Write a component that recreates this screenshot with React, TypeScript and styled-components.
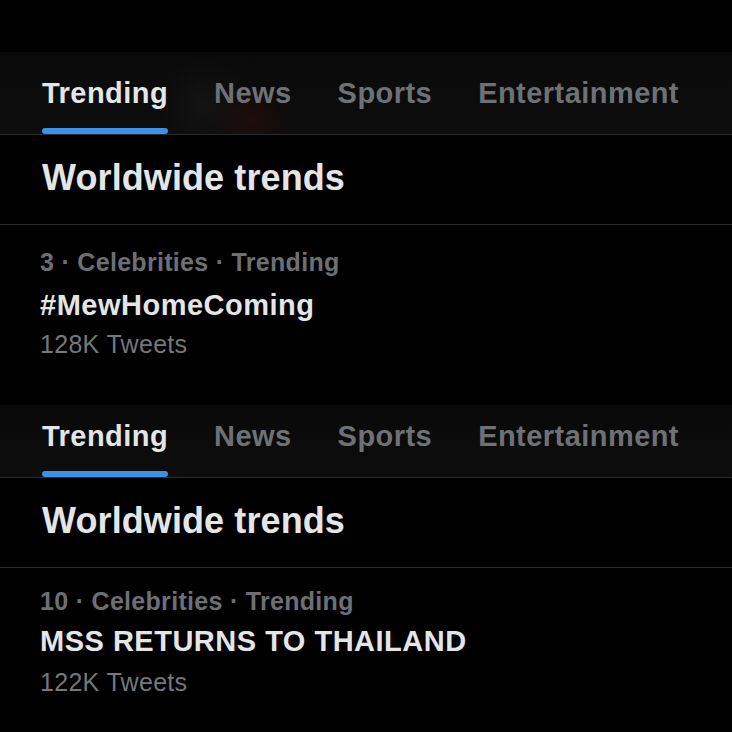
import styled, { createGlobalStyle } from 'styled-components';

const GlobalStyle = createGlobalStyle`
  html, body {
    margin: 0;
    padding: 0;
    background: #000;
  }
  body {
    font-family: 'Liberation Sans', Arial, sans-serif;
    -webkit-font-smoothing: antialiased;
  }
`;

const Page = styled.div`
  width: 732px;
  height: 732px;
  overflow: hidden;
  background: #000;
  padding-top: 52px;
  box-sizing: border-box;
`;

const Panel = styled.section`
  display: flex;
  flex-direction: column;
`;

const TabBar = styled.nav<{ $height: number; $glow?: boolean }>`
  height: ${(p) => p.$height}px;
  display: flex;
  align-items: flex-end;
  gap: 46px;
  padding: 0 42px;
  border-bottom: 1px solid #2b2e31;
  background: ${(p) =>
    p.$glow
      ? `radial-gradient(ellipse 40px 34px at 252px 82%, rgba(70, 12, 8, 0.32), transparent),
         radial-gradient(ellipse 44px 44px at 205px 62%, rgba(36, 36, 36, 0.3), transparent),
         linear-gradient(#0a0a0a, #0d0d0d)`
      : 'linear-gradient(#090909, #0d0d0d)'};
`;

const Tab = styled.div`
  display: flex;
  flex-direction: column;
  gap: 18px;
`;

const TabLabel = styled.span<{ $active?: boolean }>`
  font-size: 29px;
  line-height: 34px;
  font-weight: 700;
  letter-spacing: 0.45px;
  white-space: nowrap;
  color: ${(p) => (p.$active ? '#e4e5e6' : '#6e7176')};
`;

const Indicator = styled.div<{ $active?: boolean }>`
  height: 6px;
  border-radius: 3px;
  background: ${(p) => (p.$active ? '#3b92e6' : 'transparent')};
`;

const Header = styled.h2`
  margin: 0;
  padding: 21px 42px 24px;
  font-size: 36px;
  line-height: 44px;
  font-weight: 700;
  letter-spacing: 0.1px;
  color: #e4e5e6;
  border-bottom: 1px solid #2b2e31;
`;

const Trend = styled.div<{ $padTop: number; $padBottom: number }>`
  display: flex;
  flex-direction: column;
  padding: ${(p) => p.$padTop}px 40px ${(p) => p.$padBottom}px;
`;

const Meta = styled.div`
  font-size: 25px;
  line-height: 30px;
  font-weight: 700;
  letter-spacing: 0.3px;
  color: #6c7075;
  white-space: nowrap;
`;

const Name = styled.div<{ $gap: number }>`
  margin-top: ${(p) => p.$gap}px;
  font-size: 29px;
  line-height: 34px;
  font-weight: 700;
  letter-spacing: 0.5px;
  color: #e4e5e6;
  white-space: nowrap;
`;

const Count = styled.div<{ $gap: number }>`
  margin-top: ${(p) => p.$gap}px;
  font-size: 25px;
  line-height: 30px;
  letter-spacing: 0.3px;
  color: #74777b;
  white-space: nowrap;
`;

const tabs = ['Trending', 'News', 'Sports', 'Entertainment'];

type PanelProps = {
  barHeight: number;
  glow?: boolean;
  rank: number;
  name: string;
  tweets: string;
  padTop: number;
  padBottom: number;
  gaps: [number, number];
};

const TrendPanel = ({ barHeight, glow, rank, name, tweets, padTop, padBottom, gaps }: PanelProps) => (
  <Panel>
    <TabBar $height={barHeight} $glow={glow}>
      {tabs.map((t, i) => (
        <Tab key={t}>
          <TabLabel $active={i === 0}>{t}</TabLabel>
          <Indicator $active={i === 0} />
        </Tab>
      ))}
    </TabBar>
    <Header>Worldwide trends</Header>
    <Trend $padTop={padTop} $padBottom={padBottom}>
      <Meta>{rank} · Celebrities · Trending</Meta>
      <Name $gap={gaps[0]}>{name}</Name>
      <Count $gap={gaps[1]}>{tweets}</Count>
    </Trend>
  </Panel>
);

export default function App() {
  return (
    <>
      <GlobalStyle />
      <Page>
        <TrendPanel
          barHeight={82}
          glow
          rank={3}
          name="#MewHomeComing"
          tweets="128K Tweets"
          padTop={22}
          padBottom={46}
          gaps={[11, 7]}
        />
        <TrendPanel
          barHeight={72}
          rank={10}
          name="MSS RETURNS TO THAILAND"
          tweets="122K Tweets"
          padTop={18}
          padBottom={0}
          gaps={[8, 9]}
        />
      </Page>
    </>
  );
}
